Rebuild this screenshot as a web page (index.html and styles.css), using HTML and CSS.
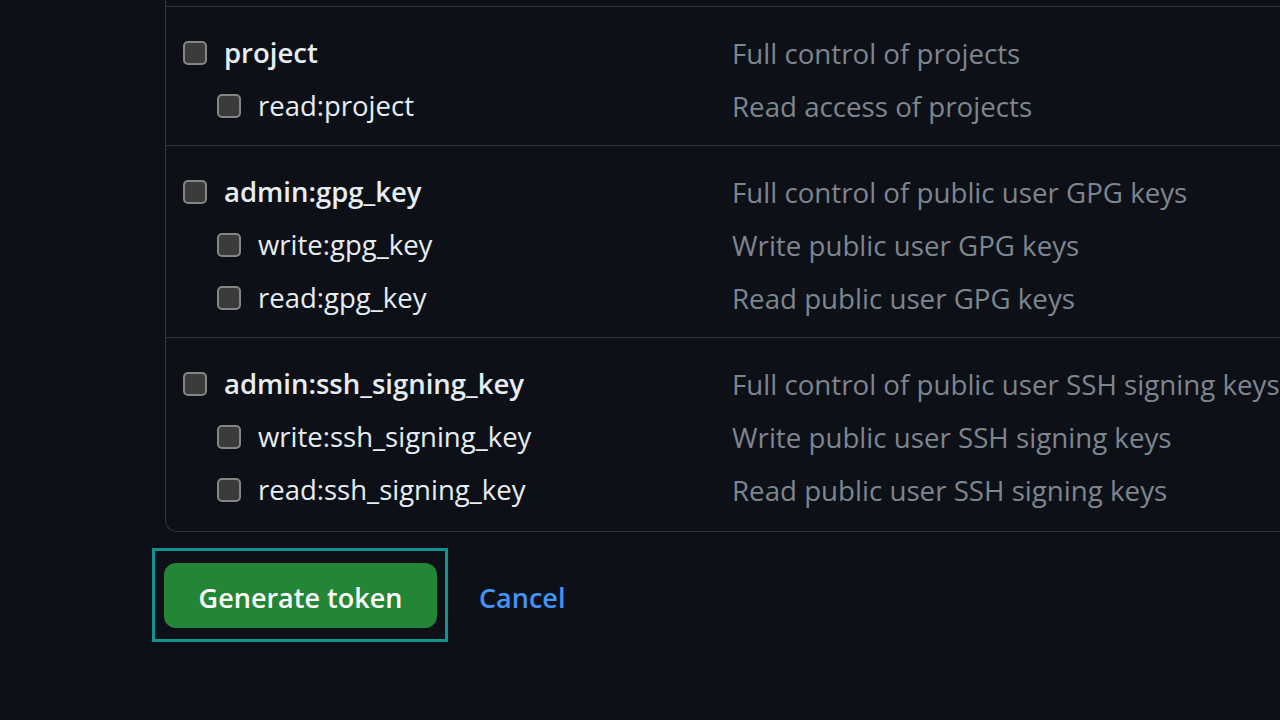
FILE: index.html
```html
<!DOCTYPE html>
<html lang="en">
<head>
<meta charset="utf-8">
<title>New personal access token</title>
<link rel="stylesheet" href="styles.css">
</head>
<body>
<div class="page">
  <div class="scopes">
    <div class="group">
      <div class="row main">
        <label class="scope"><input type="checkbox" class="cb"><span>project</span></label>
        <span class="desc">Full control of projects</span>
      </div>
      <div class="row sub">
        <label class="scope"><input type="checkbox" class="cb"><span>read:project</span></label>
        <span class="desc">Read access of projects</span>
      </div>
    </div>
    <div class="group">
      <div class="row main">
        <label class="scope"><input type="checkbox" class="cb"><span>admin:gpg_key</span></label>
        <span class="desc">Full control of public user GPG keys</span>
      </div>
      <div class="row sub">
        <label class="scope"><input type="checkbox" class="cb"><span>write:gpg_key</span></label>
        <span class="desc">Write public user GPG keys</span>
      </div>
      <div class="row sub">
        <label class="scope"><input type="checkbox" class="cb"><span>read:gpg_key</span></label>
        <span class="desc">Read public user GPG keys</span>
      </div>
    </div>
    <div class="group last">
      <div class="row main">
        <label class="scope"><input type="checkbox" class="cb"><span>admin:ssh_signing_key</span></label>
        <span class="desc">Full control of public user SSH signing keys</span>
      </div>
      <div class="row sub">
        <label class="scope"><input type="checkbox" class="cb"><span>write:ssh_signing_key</span></label>
        <span class="desc">Write public user SSH signing keys</span>
      </div>
      <div class="row sub">
        <label class="scope"><input type="checkbox" class="cb"><span>read:ssh_signing_key</span></label>
        <span class="desc">Read public user SSH signing keys</span>
      </div>
    </div>
  </div>
  <div class="actions">
    <span class="highlight"><button type="button" class="btn-primary">Generate token</button></span>
    <a class="cancel" href="#">Cancel</a>
  </div>
</div>
</body>
</html>
```

FILE: styles.css
```css
html, body {
  margin: 0;
  padding: 0;
  background: #0d1117;
  overflow: hidden;
}
body {
  width: 1280px;
  height: 720px;
  font-family: "Open Sans", "Noto Sans", sans-serif;
  font-size: 27.5px;
  color: #e6edf3;
}
.page {
  padding-left: 164px;
}
.scopes {
  margin-left: 1px;
  width: 1300px;
  border: 1px solid #30363d;
  border-top: none;
  border-radius: 0 0 12px 12px;
  padding-top: 6px;
}
.group {
  border-top: 1px solid #30363d;
  padding: 19px 0 13px;
}
.group.last {
  padding-bottom: 15px;
}
.row {
  display: grid;
  grid-template-columns: 566px 1fr;
  align-items: center;
  height: 53px;
}
.scope {
  display: flex;
  align-items: center;
  gap: 17px;
  padding-left: 17px;
  white-space: nowrap;
}
.main .scope {
  font-weight: 600;
}
.sub .scope {
  padding-left: 51px;
}
.cb {
  appearance: none;
  -webkit-appearance: none;
  margin: 0;
  width: 24px;
  height: 24px;
  box-sizing: border-box;
  border: 2px solid #858585;
  border-radius: 5px;
  background: #3b3b3b;
  flex: none;
}
.desc {
  color: #7d8590;
  font-size: 27.7px;
  white-space: nowrap;
}
.actions {
  display: flex;
  align-items: center;
  gap: 31px;
  margin-top: 16px;
  margin-left: -12px;
}
.highlight {
  display: inline-flex;
  border: 3px solid #139292;
  padding: 12px 8px 11px 9px;
}
.btn-primary {
  font-family: "Open Sans", "Noto Sans", sans-serif;
  font-size: 27px;
  font-weight: 600;
  color: #ffffff;
  background: #238636;
  border: none;
  border-radius: 12px;
  width: 273px;
  height: 65px;
  padding: 3px 0 0;
}
.cancel {
  font-size: 27px;
  font-weight: 600;
  color: #4493f8;
  text-decoration: none;
  padding-top: 4px;
}
```
